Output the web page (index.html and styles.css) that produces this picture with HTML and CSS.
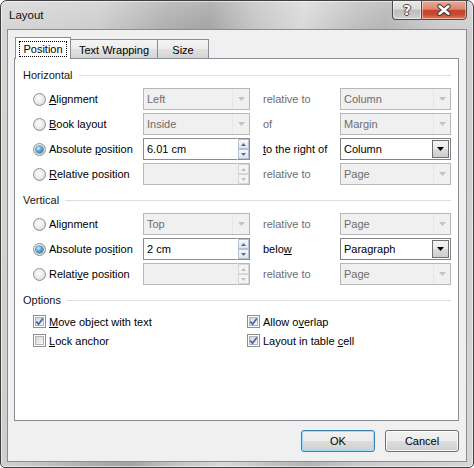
FILE: index.html
```html
<!DOCTYPE html>
<html>
<head>
<meta charset="utf-8">
<title>Layout</title>
<link rel="stylesheet" href="styles.css">
</head>
<body>
<div class="window">
  <div class="titlebar">
    <div class="title">Layout</div>
    <div class="caption">
      <div class="cbtn help"><span>?</span></div>
      <div class="cbtn close">
        <svg width="16" height="12" viewBox="0 0 16 12"><path d="M3.5 2.2 L12.5 9.8 M12.5 2.2 L3.5 9.8" stroke="#3b3b3b" stroke-width="4.4" stroke-linecap="round"/><path d="M3.5 2.2 L12.5 9.8 M12.5 2.2 L3.5 9.8" stroke="#fff" stroke-width="2.5" stroke-linecap="round"/></svg>
      </div>
    </div>
  </div>
  <div class="client">
    <div class="tabs">
      <div class="tab active"><span class="focus">Position</span></div>
      <div class="tab tw">Text Wrapping</div>
      <div class="tab size">Size</div>
    </div>
    <div class="panel">
      <section class="group">
        <div class="group-head"><span>Horizontal</span><i class="rule"></i></div>
        <div class="rows">
          <div class="row">
            <label class="opt"><span class="radio"></span><span><u>A</u>lignment</span></label>
            <div class="combo dis"><span class="val">Left</span><span class="drop"><svg width="7" height="4" viewBox="0 0 7 4"><path d="M0 0h7L3.5 4z"/></svg></span></div>
            <span class="rel dis">relative to</span>
            <div class="combo dis"><span class="val">Column</span><span class="drop"><svg width="7" height="4" viewBox="0 0 7 4"><path d="M0 0h7L3.5 4z"/></svg></span></div>
          </div>
          <div class="row">
            <label class="opt"><span class="radio"></span><span><u>B</u>ook layout</span></label>
            <div class="combo dis"><span class="val">Inside</span><span class="drop"><svg width="7" height="4" viewBox="0 0 7 4"><path d="M0 0h7L3.5 4z"/></svg></span></div>
            <span class="rel dis">of</span>
            <div class="combo dis"><span class="val">Margin</span><span class="drop"><svg width="7" height="4" viewBox="0 0 7 4"><path d="M0 0h7L3.5 4z"/></svg></span></div>
          </div>
          <div class="row">
            <label class="opt"><span class="radio on"></span><span>Absolute <u>p</u>osition</span></label>
            <div class="spin"><span class="field">6.01 cm</span><span class="updown"><span class="ub"><svg width="5" height="3" viewBox="0 0 5 3"><path d="M0 3h5L2.5 0z"/></svg></span><span class="ub"><svg width="5" height="3" viewBox="0 0 5 3"><path d="M0 0h5L2.5 3z"/></svg></span></span></div>
            <span class="rel"><u>t</u>o the right of</span>
            <div class="combo en"><span class="val">Column</span><span class="drop"><svg width="7" height="4" viewBox="0 0 7 4"><path d="M0 0h7L3.5 4z"/></svg></span></div>
          </div>
          <div class="row">
            <label class="opt"><span class="radio"></span><span><u>R</u>elative position</span></label>
            <div class="spin dis"><span class="field"></span><span class="updown"><span class="ub"><svg width="5" height="3" viewBox="0 0 5 3"><path d="M0 3h5L2.5 0z"/></svg></span><span class="ub"><svg width="5" height="3" viewBox="0 0 5 3"><path d="M0 0h5L2.5 3z"/></svg></span></span></div>
            <span class="rel dis">relative to</span>
            <div class="combo dis"><span class="val">Page</span><span class="drop"><svg width="7" height="4" viewBox="0 0 7 4"><path d="M0 0h7L3.5 4z"/></svg></span></div>
          </div>
        </div>
      </section>

      <section class="group">
        <div class="group-head"><span>Vertical</span><i class="rule"></i></div>
        <div class="rows">
          <div class="row">
            <label class="opt"><span class="radio"></span><span>Alignment</span></label>
            <div class="combo dis"><span class="val">Top</span><span class="drop"><svg width="7" height="4" viewBox="0 0 7 4"><path d="M0 0h7L3.5 4z"/></svg></span></div>
            <span class="rel dis">relative to</span>
            <div class="combo dis"><span class="val">Page</span><span class="drop"><svg width="7" height="4" viewBox="0 0 7 4"><path d="M0 0h7L3.5 4z"/></svg></span></div>
          </div>
          <div class="row">
            <label class="opt"><span class="radio on"></span><span>Absolute pos<u>i</u>tion</span></label>
            <div class="spin"><span class="field">2 cm</span><span class="updown"><span class="ub"><svg width="5" height="3" viewBox="0 0 5 3"><path d="M0 3h5L2.5 0z"/></svg></span><span class="ub"><svg width="5" height="3" viewBox="0 0 5 3"><path d="M0 0h5L2.5 3z"/></svg></span></span></div>
            <span class="rel">belo<u>w</u></span>
            <div class="combo en"><span class="val">Paragraph</span><span class="drop"><svg width="7" height="4" viewBox="0 0 7 4"><path d="M0 0h7L3.5 4z"/></svg></span></div>
          </div>
          <div class="row">
            <label class="opt"><span class="radio"></span><span>Relati<u>v</u>e position</span></label>
            <div class="spin dis"><span class="field"></span><span class="updown"><span class="ub"><svg width="5" height="3" viewBox="0 0 5 3"><path d="M0 3h5L2.5 0z"/></svg></span><span class="ub"><svg width="5" height="3" viewBox="0 0 5 3"><path d="M0 0h5L2.5 3z"/></svg></span></span></div>
            <span class="rel dis">relative to</span>
            <div class="combo dis"><span class="val">Page</span><span class="drop"><svg width="7" height="4" viewBox="0 0 7 4"><path d="M0 0h7L3.5 4z"/></svg></span></div>
          </div>
        </div>
      </section>

      <section class="group">
        <div class="group-head"><span>Options</span><i class="rule"></i></div>
        <div class="checks">
          <div class="crow">
            <label class="opt"><span class="check"><span class="box"></span><svg width="9" height="9" viewBox="0 0 9 9"><path d="M1.3 4.6 L3.6 7.2 L7.8 1.4" fill="none" stroke="#4a62a8" stroke-width="1.7"/></svg></span><span><u>M</u>ove object with text</span></label>
            <label class="opt"><span class="check"><span class="box"></span><svg width="9" height="9" viewBox="0 0 9 9"><path d="M1.3 4.6 L3.6 7.2 L7.8 1.4" fill="none" stroke="#4a62a8" stroke-width="1.7"/></svg></span><span>Allow o<u>v</u>erlap</span></label>
          </div>
          <div class="crow">
            <label class="opt"><span class="check"><span class="box"></span></span><span><u>L</u>ock anchor</span></label>
            <label class="opt"><span class="check"><span class="box"></span><svg width="9" height="9" viewBox="0 0 9 9"><path d="M1.3 4.6 L3.6 7.2 L7.8 1.4" fill="none" stroke="#4a62a8" stroke-width="1.7"/></svg></span><span>Layout in table <u>c</u>ell</span></label>
          </div>
        </div>
      </section>
    </div>
    <div class="buttons">
      <button class="btn default">OK</button>
      <button class="btn">Cancel</button>
    </div>
  </div>
</div>
</body>
</html>
```

FILE: styles.css
```css
* { box-sizing: border-box; }
html, body { margin: 0; padding: 0; }
body {
  width: 474px;
  height: 468px;
  overflow: hidden;
  background: #fff;
  font-family: "Liberation Sans", Arial, sans-serif;
  font-size: 11px;
  color: #000;
}
u { text-decoration: underline; text-underline-offset: 1px; }

.window {
  width: 474px;
  height: 468px;
  display: flex;
  flex-direction: column;
  border: 1px solid #3f3f3f;
  border-radius: 7px 7px 5px 5px;
  padding: 0 6px 5px 6px;
  background:
    linear-gradient(to bottom, rgba(255,255,255,0.2), rgba(255,255,255,0) 30px),
    linear-gradient(100deg, #d6d6d6 0%, #cdcdcd 18%, #afafaf 30%, #a3a3a3 38%, #c3c3c3 46%, #d9d9d9 55%, #c0c0c0 64%, #b4b4b4 70%, #cccccc 80%, #d6d6d6 100%);
  box-shadow: inset 0 0 0 1px rgba(255,255,255,0.55);
}

.titlebar {
  height: 28px;
  display: flex;
  justify-content: space-between;
  align-items: flex-start;
}
.title {
  padding: 8px 0 0 2px;
  font-size: 11.5px;
  color: #111;
}
.caption {
  display: flex;
  margin-top: -1px;
}
.cbtn {
  height: 20px;
  border: 1px solid #4c4c4c;
  display: flex;
  align-items: center;
  justify-content: center;
  box-shadow: inset 0 0 0 1px rgba(255,255,255,0.45);
}
.help {
  width: 29px;
  border-right: none;
  border-radius: 0 0 0 4px;
  background: linear-gradient(#ebebeb, #d8d8d8 45%, #bdbdbd 52%, #c9c9c9 85%, #d8d8d8);
}
.help span {
  font-family: "DejaVu Sans", sans-serif;
  font-weight: bold;
  font-size: 14px;
  color: #fff;
  line-height: 1;
  margin-top: -1px;
  text-shadow: -1px 0 #444, 1px 0 #444, 0 -1px #444, 0 1px #444;
}
.close {
  width: 46px;
  border-radius: 0 0 4px 0;
  background: linear-gradient(#eaa796, #dd8870 45%, #c8452c 52%, #c9482e 75%, #e1805f);
}

.client {
  flex: 1;
  display: flex;
  flex-direction: column;
  border: 1px solid #8c8c8c;
  background: #f0f0f0;
  padding: 7px 7px 9px 6px;
}

.tabs {
  height: 22px;
  margin-bottom: -1px;
  padding-left: 1px;
  display: flex;
  align-items: flex-end;
  position: relative;
  z-index: 1;
}
.tab {
  height: 19px;
  margin-bottom: 1px;
  margin-left: -1px;
  border: 1px solid #898c95;
  border-bottom: none;
  background: linear-gradient(#f4f4f4, #ececec 50%, #e0e0e0 52%, #d5d5d5);
  display: flex;
  align-items: center;
  justify-content: center;
  padding-top: 1px;
}
.tab.active {
  width: 56px;
  height: 22px;
  margin: 0;
  background: #fff;
  position: relative;
  z-index: 2;
  align-items: flex-start;
  padding-top: 3px;
}
.tab.tw { width: 88px; }
.tab.size { width: 52px; }
.focus {
  height: 16px;
  padding: 0 4px;
  outline: 1px dotted #000;
  outline-offset: -1px;
  display: flex;
  align-items: center;
}

.panel {
  flex: 1;
  border: 1px solid #898c95;
  background: #fff;
  padding: 8px 7px 0 8px;
  display: flex;
  flex-direction: column;
  gap: 7px;
}

.group-head {
  height: 16px;
  display: flex;
  align-items: center;
  gap: 6px;
  margin-bottom: 5px;
  color: #151515;
}
.rule {
  flex: 1;
  height: 1px;
  background: #d5dfe5;
}

.rows {
  display: flex;
  flex-direction: column;
  gap: 3px;
}
.row {
  display: grid;
  grid-template-columns: 120px 107px 90px 111px;
  height: 22px;
  align-items: center;
}
.opt {
  display: flex;
  align-items: center;
  gap: 3px;
  padding-left: 10px;
  white-space: nowrap;
}

.radio {
  width: 13px;
  height: 13px;
  border-radius: 50%;
  border: 1px solid #8e8f8f;
  background: radial-gradient(circle at 45% 40%, #fdfdfd 0%, #ededed 45%, #cbcbcb 100%);
  display: flex;
  align-items: center;
  justify-content: center;
  flex: none;
}
.radio.on::after {
  content: "";
  width: 7px;
  height: 7px;
  border-radius: 50%;
  background: radial-gradient(circle at 35% 32%, #d4f1fd 0%, #5aaee3 40%, #1b5f9c 100%);
  box-shadow: 0 0 0 0.6px #24527c;
}

.rel {
  padding-left: 13px;
  white-space: nowrap;
}
.dis { color: #6d6d6d; }

.combo {
  height: 22px;
  display: flex;
  border: 1px solid #7f8285;
  background: #fff;
}
.combo .val {
  flex: 1;
  padding-left: 3px;
  line-height: 20px;
  white-space: nowrap;
  overflow: hidden;
}
.combo .drop {
  width: 17px;
  display: flex;
  align-items: center;
  justify-content: center;
  fill: currentColor;
}
.combo.dis {
  background: #f0f0f0;
  border-color: #b8b8b8;
}
.combo.dis .drop {
  color: #c3c3c3;
  border-left: 1px solid #e6e6e6;
}
.combo.en .drop {
  margin: 1px;
  width: 17px;
  border: 1px solid #6f6f6f;
  background: linear-gradient(#f3f3f3, #e9e9e9 50%, #dcdcdc 52%, #cdcdcd);
  color: #000;
}

.spin {
  height: 22px;
  display: flex;
}
.spin .field {
  flex: 1;
  border: 1px solid #8a8c90;
  border-right: none;
  background: #fff;
  padding-left: 3px;
  line-height: 20px;
}
.spin .updown {
  width: 13px;
  display: flex;
  flex-direction: column;
  border: 1px solid #8a8c90;
  border-left: 1px solid #fff;
  background: #fff;
}
.ub {
  flex: 1;
  display: flex;
  align-items: center;
  justify-content: center;
  border: 1px solid #b7c2d2;
  background: linear-gradient(#f6f8fb, #dfe5ee);
  fill: #4d6fa8;
}
.spin.dis .field {
  background: #f0f0f0;
  border-color: #b8b8b8;
}
.spin.dis .updown {
  border-color: #b8b8b8;
  border-left-color: #f0f0f0;
  background: #f0f0f0;
}
.spin.dis .ub {
  border-color: #d6d6d6;
  background: #f4f4f4;
  fill: #c0c0c0;
}

.checks {
  display: flex;
  flex-direction: column;
  gap: 2px;
}
.crow {
  display: grid;
  grid-template-columns: 224px 1fr;
  height: 17px;
  align-items: center;
}
.crow .opt + .opt { padding-left: 0; }
.check {
  width: 13px;
  height: 13px;
  flex: none;
  display: grid;
  border: 1px solid #8e8f8f;
  background: #fff;
  padding: 1px;
}
.check > * { grid-area: 1 / 1; }
.check .box {
  border: 1px solid #b1b4b8;
  background: linear-gradient(135deg, #d5d5d5, #f8f8f8);
}

.buttons {
  margin-top: 9px;
  display: flex;
  justify-content: flex-end;
  gap: 10px;
}
.btn {
  width: 74px;
  height: 22px;
  margin: 0;
  padding: 0;
  border: 1px solid #707070;
  border-radius: 3px;
  background: linear-gradient(#f2f2f2, #ebebeb 50%, #dddddd 52%, #cfcfcf);
  box-shadow: inset 0 0 0 1px rgba(255,255,255,0.8);
  font-family: "Liberation Sans", Arial, sans-serif;
  font-size: 11px;
  color: #000;
}
.btn.default {
  border-color: #3c7fb1;
  box-shadow: inset 0 0 0 1px #9fdcfb;
}
```
